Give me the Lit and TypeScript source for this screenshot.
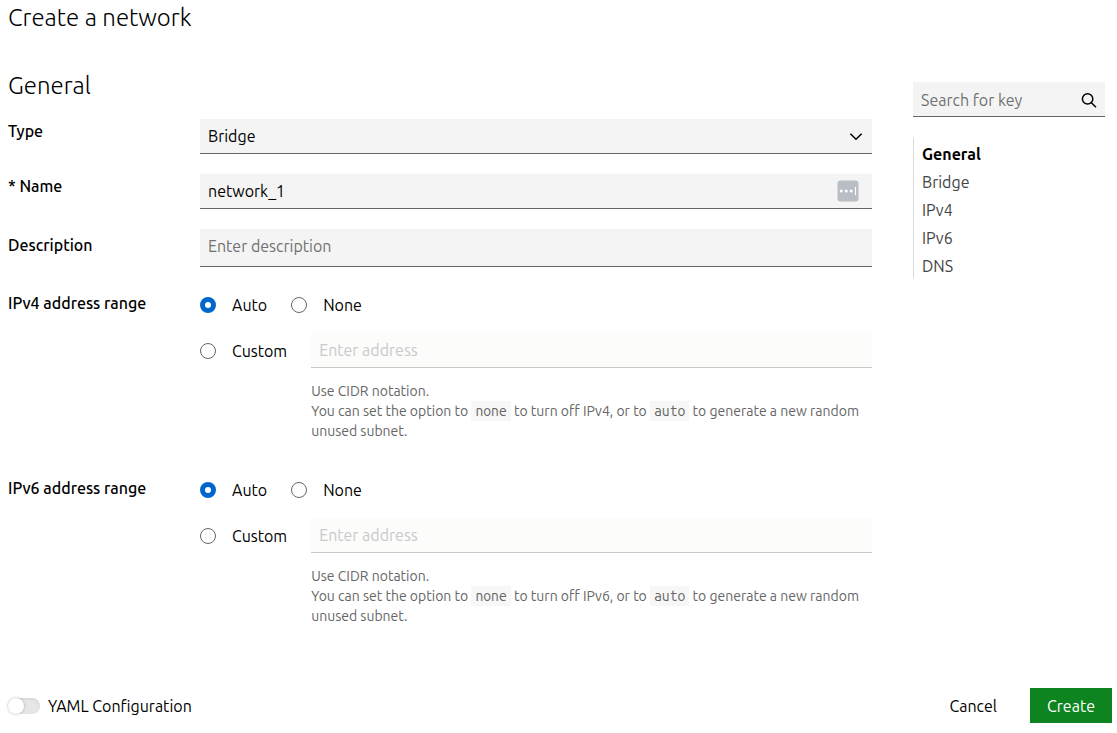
import { LitElement, html, css } from "lit";
import { customElement, property, state } from "lit/decorators.js";
import { classMap } from "lit/directives/class-map.js";

const controls = css`
  *,
  *::before,
  *::after {
    box-sizing: border-box;
  }
  input,
  select,
  textarea,
  button {
    font: inherit;
    color: inherit;
    margin: 0;
    border-radius: 0;
  }
  .field {
    display: block;
    width: 100%;
    height: 35px;
    padding: 0 8px;
    border: 0;
    border-bottom: 1px solid #666;
    background: #f4f4f4;
    appearance: none;
    outline: none;
  }
  .field::placeholder {
    color: #717171;
    opacity: 1;
  }
  .field:disabled {
    opacity: 1;
    border-bottom-color: #c9c9c9;
    background: #fcfcfb;
  }
  .field:disabled::placeholder {
    color: #c9cacb;
  }
  .label {
    font-weight: 550;
    line-height: 24px;
  }
`;

@customElement("address-range")
class AddressRange extends LitElement {
  @property() family = "IPv4";
  @state() mode = "auto";

  static styles = [
    controls,
    css`
      :host {
        display: block;
      }
      .range {
        display: grid;
        grid-template-columns: 192px minmax(0, 1fr);
      }
      .options {
        display: grid;
        gap: 16px;
        padding-top: 2px;
      }
      .line {
        display: flex;
        gap: 24px;
      }
      .radio {
        display: flex;
        align-items: center;
        gap: 16px;
        height: 24px;
      }
      .radio input {
        appearance: none;
        flex: none;
        width: 16px;
        height: 16px;
        border: 1px solid #666;
        border-radius: 50%;
        background: #fff;
      }
      .radio input:checked {
        border: 5px solid #06c;
      }
      .custom {
        margin-top: 6px;
      }
      .entry {
        flex: 1;
        min-width: 0;
      }
      .help {
        margin: 13px 0 0;
        color: #666;
        font-size: 14px;
        line-height: 20px;
      }
      code {
        padding: 2px 4px;
        background: #f7f7f7;
        font-family: "Ubuntu Mono", "Noto Sans Mono", "DejaVu Sans Mono", monospace;
        font-size: 14px;
      }
    `,
  ];

  private option(value: string, text: string) {
    return html`<label class=${classMap({ radio: true, custom: value === "custom" })}>
      <input
        type="radio"
        name="mode"
        .checked=${this.mode === value}
        @change=${() => (this.mode = value)}
      />${text}
    </label>`;
  }

  render() {
    return html`<div class="range" role="group" aria-labelledby="title">
      <span class="label" id="title">${this.family} address range</span>
      <div class="options">
        <div class="line">${this.option("auto", "Auto")}${this.option("none", "None")}</div>
        <div class="line">
          ${this.option("custom", "Custom")}
          <div class="entry">
            <input
              class="field"
              type="text"
              aria-label="${this.family} address"
              aria-describedby="help"
              placeholder="Enter address"
              ?disabled=${this.mode !== "custom"}
            />
            <p class="help" id="help">
              Use CIDR notation.<br />You can set the option to <code>none</code> to turn off
              ${this.family}, or to <code>auto</code> to generate a new random unused subnet.
            </p>
          </div>
        </div>
      </div>
    </div>`;
  }
}

@customElement("app-root")
class AppRoot extends LitElement {
  @state() section = "General";

  static styles = [
    controls,
    css`
      :host {
        display: flex;
        flex-direction: column;
        min-height: 100vh;
        box-sizing: border-box;
        padding: 2px 5px 10px 8px;
        background: #fff;
        color: #000;
        font-family: Ubuntu, "Noto Sans", sans-serif;
        font-size: 16px;
        line-height: 24px;
      }
      h1,
      h2 {
        margin: 0;
        font-size: 24px;
        font-weight: 300;
        line-height: 32px;
      }
      .body {
        display: grid;
        grid-template-columns: minmax(0, 1fr) 192px;
        gap: 41px;
        margin-top: 36px;
        padding-right: 7px;
      }
      .form {
        display: flex;
        flex-direction: column;
      }
      .row {
        display: grid;
        grid-template-columns: 192px minmax(0, 1fr);
        margin-bottom: 20px;
      }
      h2 + .row {
        margin-top: 17px;
      }
      .description {
        margin-bottom: 24px;
      }
      .description .label {
        padding-top: 4px;
      }
      .description .field {
        height: 38px;
        padding: 5px 8px;
        resize: none;
        overflow: hidden;
      }
      .control {
        position: relative;
      }
      .icon {
        position: absolute;
        top: 0;
        bottom: 0;
        right: 8px;
        margin: auto 0;
        pointer-events: none;
      }
      .autofill {
        right: 13px;
        bottom: 2px;
      }
      address-range + address-range {
        margin-top: 35px;
      }
      .side {
        padding-top: 12px;
      }
      .search .field {
        padding: 1px 32px 0 8px;
      }
      .search .field::-webkit-search-cancel-button {
        display: none;
      }
      .sections {
        display: grid;
        margin-top: 21px;
        border-left: 1px solid #d9d9d9;
      }
      .sections a {
        height: 28px;
        padding: 4px 0 0 8px;
        color: #444;
        text-decoration: none;
      }
      .sections .active {
        color: #000;
        font-weight: 700;
      }
      .footer {
        display: flex;
        align-items: center;
        margin-top: auto;
      }
      .switch {
        display: flex;
        align-items: center;
        gap: 8px;
        margin-right: auto;
      }
      .switch input {
        appearance: none;
        width: 32px;
        height: 16px;
        border-radius: 8px;
        background: #e6e6e6;
        box-shadow: inset 0 1px 3px #00000018;
      }
      .switch input::before {
        content: "";
        display: block;
        width: 16px;
        height: 16px;
        border-radius: 50%;
        background: #fff;
        box-shadow: 0 0 2px 1px #00000022;
      }
      .switch input:checked {
        background: #06c;
      }
      .switch input:checked::before {
        margin-left: 16px;
      }
      button {
        height: 35px;
        padding: 0 17px;
        border: 0;
        background: none;
      }
      .create {
        margin-left: 16px;
        background: #0e8420;
        color: #fff;
      }
    `,
  ];

  render() {
    return html`
      <h1>Create a network</h1>
      <div class="body">
        <form class="form">
          <h2>General</h2>
          <div class="row">
            <label class="label" for="type">Type</label>
            <div class="control">
              <select class="field" id="type">
                <option>Bridge</option>
              </select>
              <svg class="icon" width="16" height="16" viewBox="0 0 16 16" fill="none" stroke="#000" stroke-width="1.5">
                <path d="M2.4 4.7 8 10.3l5.6-5.6" />
              </svg>
            </div>
          </div>
          <div class="row">
            <label class="label" for="name">* Name</label>
            <div class="control">
              <input class="field" id="name" type="text" value="network_1" required />
              <svg class="icon autofill" width="22" height="22" viewBox="0 0 22 22">
                <rect x=".5" y=".5" width="21" height="21" rx="3" fill="#b9bec4" />
                <circle cx="4.2" cy="11" r="1.5" fill="#fff" />
                <circle cx="9.2" cy="11" r="1.5" fill="#fff" />
                <circle cx="14.2" cy="11" r="1.5" fill="#fff" />
                <path d="M18.5 6.8v8.4" stroke="#fff" stroke-width="1.1" />
              </svg>
            </div>
          </div>
          <div class="row description">
            <label class="label" for="description">Description</label>
            <textarea class="field" id="description" rows="1" placeholder="Enter description"></textarea>
          </div>
          <address-range family="IPv4"></address-range>
          <address-range family="IPv6"></address-range>
        </form>
        <aside class="side">
          <div class="control search">
            <input class="field" type="search" aria-label="Search for key" placeholder="Search for key" />
            <svg class="icon" width="16" height="16" viewBox="0 0 16 16" fill="none" stroke="#000" stroke-width="1.5">
              <circle cx="6.6" cy="6.9" r="5.2" />
              <path d="m10.4 10.7 4.6 4.5" />
            </svg>
          </div>
          <nav class="sections">
            ${["General", "Bridge", "IPv4", "IPv6", "DNS"].map(
              (name) => html`<a
                href="#${name}"
                class=${classMap({ active: this.section === name })}
                @click=${() => (this.section = name)}
                >${name}</a
              >`
            )}
          </nav>
        </aside>
      </div>
      <footer class="footer">
        <label class="switch"><input type="checkbox" role="switch" />YAML Configuration</label>
        <button type="button">Cancel</button>
        <button type="button" class="create">Create</button>
      </footer>
    `;
  }
}
